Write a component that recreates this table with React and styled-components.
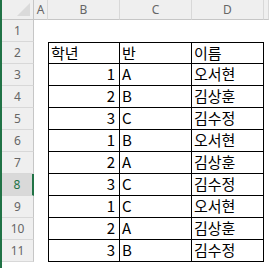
import React from 'react';
import styled, { createGlobalStyle, css } from 'styled-components';

const GlobalStyle = createGlobalStyle`
  html, body {
    margin: 0;
    background: #ffffff;
    overflow: hidden;
  }
`;

const Sheet = styled.div`
  display: grid;
  grid-template-columns: 32px 14px 72px 72px 72px 1fr;
  grid-template-rows: 20px repeat(11, 22px);
  width: 269px;
  height: 268px;
  box-sizing: border-box;
  border-left: 2px solid #217346;
  background: #ffffff;
`;

const Corner = styled.div`
  position: relative;
  background: #efefef;
  border-right: 1px solid #c6c6c6;
  border-bottom: 1px solid #c6c6c6;
  box-sizing: border-box;

  &::after {
    content: '';
    position: absolute;
    right: 3px;
    bottom: 3px;
    width: 0;
    height: 0;
    border-left: 13px solid transparent;
    border-bottom: 13px solid #dadada;
  }
`;

const ColHeader = styled.div`
  display: flex;
  align-items: center;
  justify-content: center;
  background: #efefef;
  border-right: 1px solid #d8d8d8;
  border-bottom: 1px solid #c6c6c6;
  box-sizing: border-box;
  font-family: 'Noto Sans', 'Liberation Sans', sans-serif;
  font-size: 12px;
  color: #666666;
  padding-bottom: 1px;
`;

const RowHeader = styled.div`
  display: flex;
  align-items: center;
  justify-content: center;
  background: ${(p) => (p.$active ? '#d9d9d9' : '#efefef')};
  border-bottom: 1px solid #d8d8d8;
  border-right: ${(p) => (p.$active ? '2px solid #217346' : '1px solid #c6c6c6')};
  box-sizing: border-box;
  font-family: 'Noto Sans', 'Liberation Sans', sans-serif;
  font-size: 12px;
  color: ${(p) => (p.$active ? '#217346' : '#666666')};
`;

const Blank = styled.div`
  background: #ffffff;
`;

const Cell = styled.div`
  display: flex;
  align-items: center;
  justify-content: ${(p) => (p.$right ? 'flex-end' : 'flex-start')};
  padding: 0 ${(p) => (p.$right ? '4px' : '2px')} 1px 2px;
  box-sizing: border-box;
  border-right: 1px solid #000000;
  border-bottom: 1px solid #000000;
  ${(p) => p.$left && css`border-left: 1px solid #000000;`}
  ${(p) => p.$top && css`border-top: 1px solid #000000;`}
  margin-top: ${(p) => (p.$top ? '0' : '-1px')};
  height: ${(p) => (p.$top ? '22px' : '23px')};
  font-family: 'Noto Sans CJK KR', 'Noto Sans', sans-serif;
  font-size: 15px;
  color: #000000;
  white-space: nowrap;
  overflow: hidden;
`;

const columns = ['A', 'B', 'C', 'D', ''];

const rows = [
  [1, 'A', '오서현'],
  [2, 'B', '김상훈'],
  [3, 'C', '김수정'],
  [1, 'B', '오서현'],
  [2, 'A', '김상훈'],
  [3, 'C', '김수정'],
  [1, 'C', '오서현'],
  [2, 'A', '김상훈'],
  [3, 'B', '김수정'],
];

const activeRow = 8;

export default function App() {
  return (
    <>
      <GlobalStyle />
      <Sheet>
        <Corner />
        {columns.map((c, i) => (
          <ColHeader key={i}>{c}</ColHeader>
        ))}

        <RowHeader>1</RowHeader>
        {columns.map((_, i) => (
          <Blank key={i} />
        ))}

        <RowHeader>2</RowHeader>
        <Blank />
        <Cell $left $top>학년</Cell>
        <Cell $top>반</Cell>
        <Cell $top>이름</Cell>
        <Blank />

        {rows.map(([grade, cls, name], i) => {
          const n = i + 3;
          return (
            <React.Fragment key={n}>
              <RowHeader $active={n === activeRow}>{n}</RowHeader>
              <Blank />
              <Cell $left $right>{grade}</Cell>
              <Cell>{cls}</Cell>
              <Cell>{name}</Cell>
              <Blank />
            </React.Fragment>
          );
        })}
      </Sheet>
    </>
  );
}
